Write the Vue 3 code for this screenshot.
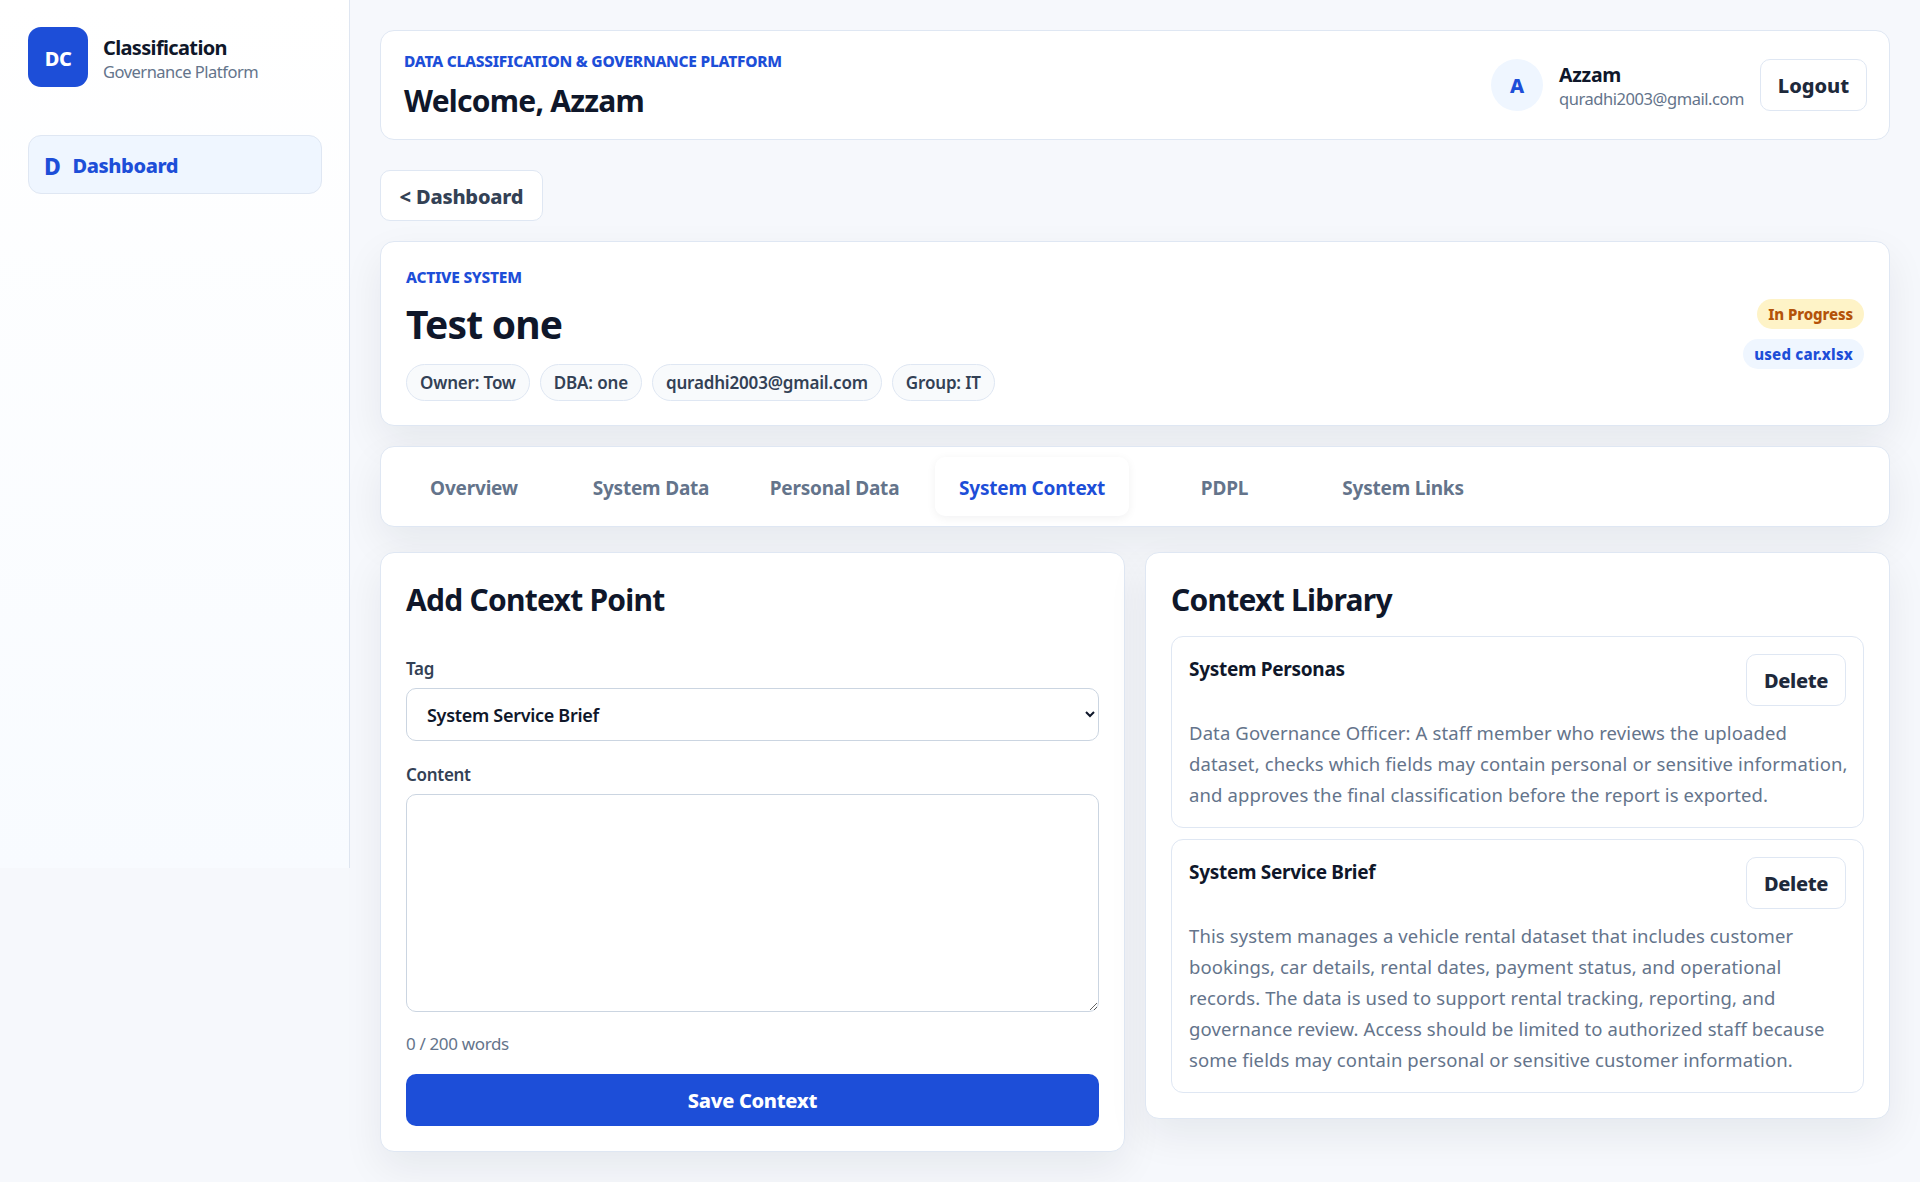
<script setup>
const tabs = [
  { label: 'Overview', width: 168 },
  { label: 'System Data', width: 166 },
  { label: 'Personal Data', width: 181 },
  { label: 'System Context', width: 194, active: true },
  { label: 'PDPL', width: 171 },
  { label: 'System Links', width: 166 },
]
const chips = ['Owner: Tow', 'DBA: one', 'quradhi2003@gmail.com', 'Group: IT']
const entries = [
  { name: 'System Personas', text: 'Data Governance Officer: A staff member who reviews the uploaded dataset, checks which fields may contain personal or sensitive information, and approves the final classification before the report is exported.' },
  { name: 'System Service Brief', text: 'This system manages a vehicle rental dataset that includes customer bookings, car details, rental dates, payment status, and operational records. The data is used to support rental tracking, reporting, and governance review. Access should be limited to authorized staff because some fields may contain personal or sensitive customer information.' },
]
</script>

<template>
  <div class="app">
    <aside class="sidebar">
      <div class="brand">
        <div class="logo">DC</div>
        <div class="brand-text">
          <div class="brand-name">Classification</div>
          <div class="brand-sub">Governance Platform</div>
        </div>
      </div>
      <div class="nav-item"><span class="nav-letter">D</span><span>Dashboard</span></div>
    </aside>

    <main class="main">
      <header class="topbar">
        <div>
          <div class="eyebrow">DATA CLASSIFICATION &amp; GOVERNANCE PLATFORM</div>
          <h1 class="welcome">Welcome, Azzam</h1>
        </div>
        <div class="user">
          <div class="avatar">A</div>
          <div class="user-text">
            <div class="user-name">Azzam</div>
            <div class="user-mail">quradhi2003@gmail.com</div>
          </div>
          <button class="btn logout">Logout</button>
        </div>
      </header>

      <button class="btn back">&lt; Dashboard</button>

      <section class="hero">
        <div>
          <div class="hero-label">ACTIVE SYSTEM</div>
          <h2 class="hero-title">Test one</h2>
          <div class="chips">
            <span v-for="c in chips" :key="c" class="chip">{{ c }}</span>
          </div>
        </div>
        <div class="badges">
          <span class="badge amber">In Progress</span>
          <span class="badge blue">used car.xlsx</span>
        </div>
      </section>

      <nav class="tabs">
        <div v-for="t in tabs" :key="t.label" class="tab" :class="{ active: t.active }" :style="{ width: t.width + 'px' }">{{ t.label }}</div>
      </nav>

      <div class="columns">
        <section class="panel form-panel">
          <h3 class="panel-title">Add Context Point</h3>
          <label class="field-label first">Tag</label>
          <select class="select">
            <option>System Service Brief</option>
            <option>System Personas</option>
          </select>
          <label class="field-label second">Content</label>
          <textarea class="textarea"></textarea>
          <div class="count">0 / 200 words</div>
          <button class="save">Save Context</button>
        </section>

        <section class="panel library">
          <h3 class="panel-title">Context Library</h3>
          <div class="entries">
            <article v-for="e in entries" :key="e.name" class="entry">
              <div class="entry-head">
                <div class="entry-name">{{ e.name }}</div>
                <button class="btn delete">Delete</button>
              </div>
              <p class="entry-text">{{ e.text }}</p>
            </article>
          </div>
        </section>
      </div>
    </main>
  </div>
</template>

<style>
html, body { margin: 0; background: #f6f8fc; }
</style>

<style scoped>
* { box-sizing: border-box; }
.app {
  display: flex;
  align-items: flex-start;
  min-height: 1182px;
  font-family: "Noto Sans", "Open Sans", sans-serif;
  color: #0f172a;
  background: #f6f8fc;
}
.sidebar {
  width: 350px;
  height: 868px;
  flex: none;
  padding: 27px 27px 0 28px;
  background: linear-gradient(180deg, #ffffff, #f8fbff);
  border-right: 1px solid #dfe6f1;
}
.brand { display: flex; align-items: center; gap: 15px; }
.logo {
  width: 60px; height: 60px;
  border-radius: 13px;
  background: #1d4ed8;
  color: #fff;
  font-weight: 800;
  font-size: 20px;
  letter-spacing: -0.5px;
  padding-top: 3px;
  display: flex; align-items: center; justify-content: center;
}
.brand-text { padding-top: 4px; }
.brand-name { font-size: 20px; font-weight: 700; line-height: 26px; letter-spacing: -0.65px; }
.brand-sub { margin-top: -1px; font-size: 16.5px; line-height: 24px; color: #64748b; letter-spacing: -0.5px; }
.nav-item {
  margin-top: 48px;
  height: 59px;
  border: 1px solid #dfe7f3;
  border-radius: 13px;
  background: #eff6ff;
  color: #1d4ed8;
  font-weight: 800;
  font-size: 20px;
  letter-spacing: -0.4px;
  display: flex; align-items: center;
  padding: 2px 0 0 15px;
  gap: 12px;
}
.nav-letter { font-size: 23px; line-height: 24px; }

.main { flex: 1; min-width: 0; padding: 30px 30px 0; }
.topbar {
  height: 110px;
  background: #fff;
  border: 1px solid #dfe7f3;
  border-radius: 14px;
  display: flex;
  justify-content: space-between;
  align-items: flex-start;
  padding: 20px 22px 0 23px;
}
.eyebrow { font-size: 15.5px; font-weight: 800; line-height: 20px; color: #1d4ed8; letter-spacing: -0.25px; }
.welcome { margin: 8px 0 0; font-size: 30px; line-height: 44px; font-weight: 700; letter-spacing: -0.75px; }
.user { display: flex; align-items: center; gap: 16px; margin-top: 8px; }
.avatar {
  width: 52px; height: 52px;
  border-radius: 50%;
  background: #eff6ff;
  color: #1d4ed8;
  font-weight: 800;
  font-size: 20px;
  display: flex; align-items: center; justify-content: center;
}
.user-text { padding-top: 4px; }
.user-name { font-size: 19.5px; font-weight: 700; line-height: 24px; letter-spacing: -0.3px; }
.user-mail { font-size: 16.5px; line-height: 24px; color: #64748b; letter-spacing: -0.45px; }
.btn {
  font-family: inherit;
  background: #fff;
  border: 1px solid #dfe7f3;
  border-radius: 10px;
  font-weight: 800;
  font-size: 20px;
  color: #1e293b;
  letter-spacing: -0.4px;
  padding: 1px 0 0;
}
.logout { width: 107px; height: 52px; letter-spacing: 0; }
.back {
  display: block;
  width: 163px; height: 51px;
  margin-top: 30px;
  padding-top: 2px;
  color: #334155;
  font-size: 20px;
  letter-spacing: -0.2px;
}
.hero {
  margin-top: 20px;
  height: 185px;
  background: #fff;
  border: 1px solid #dfe7f3;
  border-radius: 14px;
  box-shadow: 0 16px 40px rgba(15, 23, 42, 0.07);
  display: flex;
  justify-content: space-between;
  align-items: center;
  padding: 0 25px;
}
.hero-label { font-size: 15.5px; font-weight: 800; line-height: 20px; color: #1d4ed8; letter-spacing: -0.25px; }
.hero-title { margin: 11px 0 0; font-size: 39px; line-height: 52px; font-weight: 700; letter-spacing: -0.8px; }
.chips { display: flex; gap: 10px; margin-top: 14px; }
.chip {
  height: 37px;
  padding: 1px 13px 0;
  display: flex; align-items: center;
  border: 1px solid #dfe7f3;
  border-radius: 999px;
  background: #f8fafc;
  color: #334155;
  font-size: 17px;
  font-weight: 600;
  letter-spacing: -0.17px;
}
.badges { display: flex; flex-direction: column; align-items: flex-end; gap: 10px; }
.badge {
  height: 30px;
  padding: 0 11px;
  border-radius: 999px;
  font-size: 15px;
  font-weight: 800;
  display: flex; align-items: center;
}
.amber { background: #fef3c7; color: #b45309; letter-spacing: -0.1px; }
.blue { background: #eff6ff; color: #1d4ed8; letter-spacing: 0.2px; }
.tabs {
  margin-top: 20px;
  height: 81px;
  background: #fff;
  border: 1px solid #dfe7f3;
  border-radius: 14px;
  box-shadow: 0 16px 40px rgba(15, 23, 42, 0.07);
  display: flex;
  align-items: center;
  gap: 10px;
  padding: 0 9px;
}
.tab {
  height: 59px;
  flex: none;
  border-radius: 10px;
  padding-top: 2px;
  display: flex; align-items: center; justify-content: center;
  font-size: 19px;
  font-weight: 700;
  color: #64748b;
  letter-spacing: -0.2px;
}
.tab.active {
  color: #1d4ed8;
  background: #fff;
  box-shadow: 0 2px 10px rgba(15, 23, 42, 0.06);
}
.columns {
  margin-top: 25px;
  display: grid;
  grid-template-columns: 1fr 1fr;
  gap: 20px;
  align-items: start;
  padding-bottom: 31px;
}
.panel {
  background: #fff;
  border: 1px solid #dfe7f3;
  border-radius: 14px;
  box-shadow: 0 16px 40px rgba(15, 23, 42, 0.07);
  padding: 25px;
}
.panel-title { margin: 0; font-size: 30px; line-height: 44px; font-weight: 700; letter-spacing: -0.75px; }
.field-label {
  display: block;
  font-size: 17px;
  font-weight: 600;
  line-height: 24px;
  color: #334155;
  letter-spacing: -0.3px;
}
.first { margin-top: 35px; margin-bottom: 7px; }
.second { margin-top: 22px; margin-bottom: 7px; }
.select {
  display: block;
  width: 100%;
  height: 53px;
  border: 1px solid #cbd5e1;
  border-radius: 10px;
  background: #fff;
  padding: 0 16px;
  font-family: inherit;
  font-size: 18px;
  font-weight: 600;
  color: #0f172a;
  letter-spacing: -0.3px;
}
.textarea {
  display: block;
  width: 100%;
  height: 218px;
  border: 1px solid #cbd5e1;
  border-radius: 10px;
  background: #fff;
  margin: 0;
}
.count { margin-top: 20px; font-size: 17px; line-height: 24px; color: #64748b; letter-spacing: -0.35px; }
.save {
  display: block;
  width: 100%;
  height: 52px;
  margin-top: 18px;
  border: none;
  border-radius: 10px;
  background: #1d4ed8;
  color: #fff;
  font-family: inherit;
  font-size: 20px;
  font-weight: 800;
  letter-spacing: -0.3px;
}
.library .entries { margin-top: 14px; display: flex; flex-direction: column; gap: 11px; }
.entry {
  border: 1px solid #dfe7f3;
  border-radius: 12px;
  padding: 17px;
}
.entry-head { display: flex; justify-content: space-between; align-items: flex-start; }
.entry-name { font-size: 19px; font-weight: 700; line-height: 30px; letter-spacing: -0.3px; }
.delete { width: 100px; height: 52px; }
.entry-text {
  margin: 11px -8px 0 0;
  font-size: 18.5px;
  line-height: 31px;
  color: #64748b;
  letter-spacing: 0.12px;
}
</style>
